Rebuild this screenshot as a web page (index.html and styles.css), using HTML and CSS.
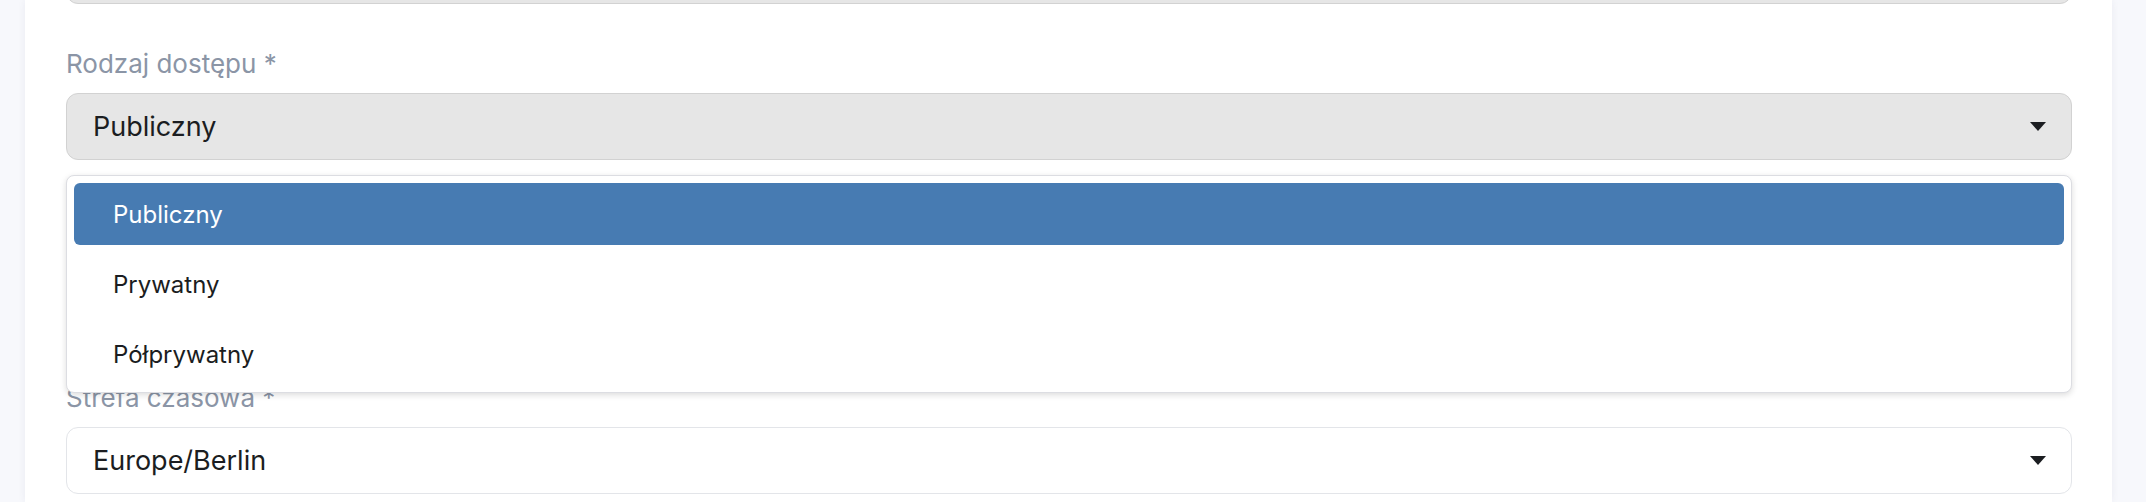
FILE: index.html
```html
<!DOCTYPE html>
<html lang="pl">
<head>
<meta charset="utf-8">
<title>Formularz</title>
<link rel="stylesheet" href="styles.css">
</head>
<body>
<div class="page">
  <main class="card">
    <div class="field field-top">
      <div class="control control-disabled"></div>
    </div>

    <div class="field field-open">
      <label class="label">Rodzaj dostępu *</label>
      <div class="select-wrap">
        <div class="control control-disabled">
          <span class="value">Publiczny</span>
          <svg class="caret" width="16" height="9" viewBox="0 0 16 9"><path d="M0 0H16L8 9Z" fill="#1b1d21"/></svg>
        </div>
        <ul class="menu">
          <li class="option option-active">Publiczny</li>
          <li class="option">Prywatny</li>
          <li class="option">Półprywatny</li>
        </ul>
      </div>
    </div>

    <div class="field field-last">
      <label class="label">Strefa czasowa *</label>
      <div class="control">
        <span class="value">Europe/Berlin</span>
        <svg class="caret" width="16" height="9" viewBox="0 0 16 9"><path d="M0 0H16L8 9Z" fill="#1b1d21"/></svg>
      </div>
    </div>
  </main>
</div>
</body>
</html>
```

FILE: styles.css
```css
* { box-sizing: border-box; }

html, body {
  margin: 0;
  padding: 0;
  background: #f7f8fc;
  height: 502px;
  overflow: hidden;
}

body {
  font-family: Inter, "Liberation Sans", sans-serif;
}

.page {
  display: flex;
  height: 502px;
  padding-left: 25px;
  padding-right: 34px;
}

.card {
  flex: 1;
  background: #ffffff;
  box-shadow: 0 0 8px rgba(20, 30, 60, 0.06);
  padding: 0 40px 0 41px;
  overflow: hidden;
}

.field {
  display: flex;
  flex-direction: column;
  gap: 11px;
  margin-bottom: 42px;
}

.field-top {
  margin-top: -63px;
}

.field-open {
  margin-bottom: 220px;
}

.field-last {
  margin-bottom: 0;
}

.label {
  font-size: 26px;
  line-height: 36px;
  color: #8b95a6;
}

.select-wrap {
  position: relative;
}

.control {
  height: 67px;
  border: 1px solid #e3e5e9;
  border-radius: 12px;
  background: #ffffff;
  display: flex;
  align-items: center;
  justify-content: space-between;
  padding: 0 25px 0 26px;
}

.control-disabled {
  background: #e6e6e6;
  border-color: #d2d2d2;
}

.value {
  font-size: 27px;
  color: #1b1d21;
}

.caret {
  display: block;
}

.menu {
  position: absolute;
  top: 82px;
  left: 0;
  right: 0;
  margin: 0;
  padding: 7px;
  list-style: none;
  background: #ffffff;
  border: 1px solid #dcdde2;
  border-radius: 8px;
  box-shadow: 0 2px 6px rgba(0, 0, 0, 0.14);
  display: flex;
  flex-direction: column;
  gap: 8px;
  z-index: 2;
}

.option {
  height: 62px;
  display: flex;
  align-items: center;
  padding-left: 39px;
  font-size: 24px;
  color: #1b1d21;
  border-radius: 6px;
}

.option-active {
  background: #477bb2;
  color: #ffffff;
}
```
